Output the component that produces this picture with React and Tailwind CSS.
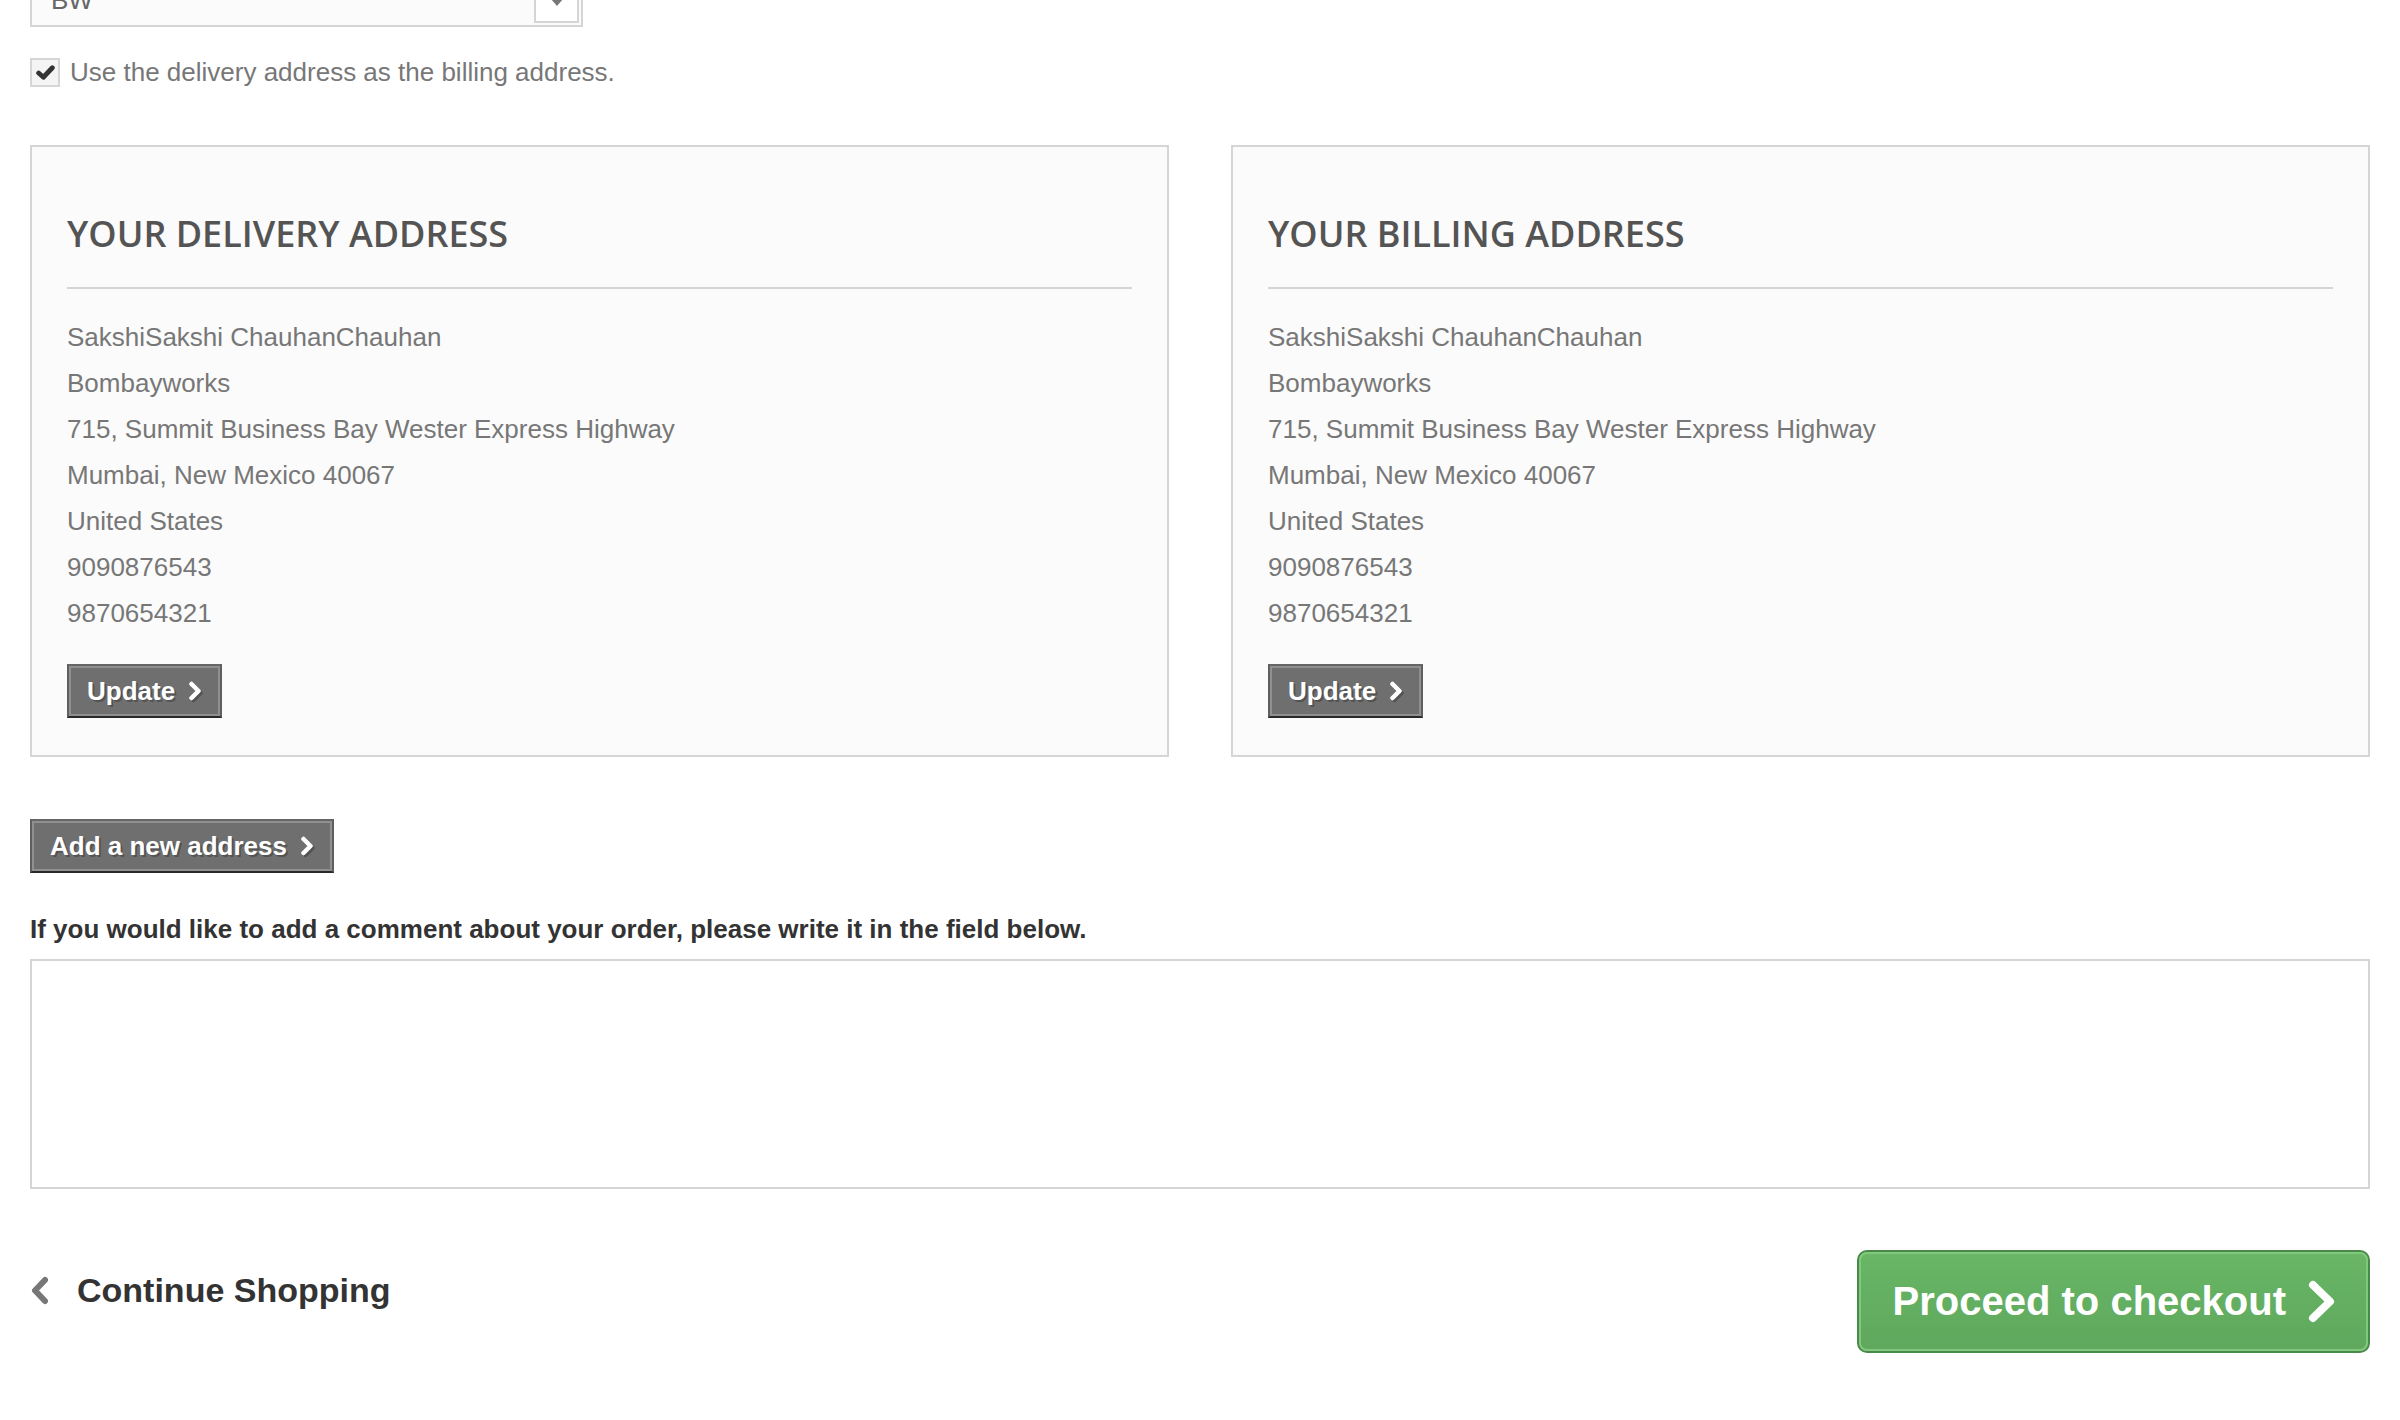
import React from 'react';

const lines = [
  'SakshiSakshi ChauhanChauhan',
  'Bombayworks',
  '715, Summit Business Bay Wester Express Highway',
  'Mumbai, New Mexico 40067',
  'United States',
  '9090876543',
  '9870654321',
];

const ChevronRight = ({ className, width = 4.5 }) => (
  <svg viewBox="0 0 14 20" className={className} fill="none" stroke="currentColor" strokeWidth={width} strokeLinecap="round" strokeLinejoin="round">
    <path d="M3.5 3l7 7-7 7" />
  </svg>
);

const SmallButton = ({ children }) => (
  <button className="inline-block border-2 border-[#5f5f5f] border-t-[#666666] border-b-[#292929] bg-[#6f6f6f] text-white">
    <span className="flex items-center gap-[13px] border-2 border-[#909090] px-[16px] py-[6px] text-[26px] font-bold leading-[34px] [text-shadow:2px_2px_0_rgba(0,0,0,0.25)]">
      {children}
      <ChevronRight className="h-[20px] w-[14px] drop-shadow-[2px_2px_0_rgba(0,0,0,0.25)]" />
    </span>
  </button>
);

const AddressBox = ({ title }) => (
  <div className="border-2 border-[#d6d4d4] bg-[#fbfbfb] px-[35px] pt-[65px] pb-[37px]">
    <h3 className="border-b-2 border-[#d6d4d4] pb-[31px] font-['Open_Sans',sans-serif] text-[36px] font-semibold uppercase leading-[44px] text-[#555454]">
      {title}
    </h3>
    <ul className="mt-[25px] text-[26px] leading-[46px] text-[#777777]">
      {lines.map((line) => (
        <li key={line}>{line}</li>
      ))}
    </ul>
    <div className="mt-[28px]">
      <SmallButton>Update</SmallButton>
    </div>
  </div>
);

export default function App() {
  return (
    <div className="min-h-screen overflow-hidden bg-white px-[30px] font-['Liberation_Sans',Arial,sans-serif] text-[26px]">
      {/* country select, scrolled half out of view */}
      <div className="relative -mt-[27px] flex h-[54px] w-[553px] items-center border-2 border-[#d6d4d4] bg-[#fbfbfb] pl-[19px] leading-[50px] text-[#666666]">
        BW
        <div className="absolute right-[2px] bottom-[2px] flex h-[46px] w-[45px] items-center justify-center border-2 border-[#d6d4d4] bg-white">
          <svg viewBox="0 0 12 7" className="mt-[4px] h-[7px] w-[12px] text-[#777777]">
            <path d="M0 0h12L6 7z" fill="currentColor" />
          </svg>
        </div>
      </div>

      <label className="mt-[31px] flex h-[29px] items-center gap-[10px] text-[#777777]">
        <span className="flex h-[29px] w-[30px] items-center justify-center border-2 border-[#d6d6d6] bg-[#f4f4f4]">
          <svg viewBox="0 0 18 14" className="h-[15px] w-[19px] text-[#333333]" fill="none" stroke="currentColor" strokeWidth="4.5" strokeLinecap="round" strokeLinejoin="round">
            <path d="M2.5 7.5l4.5 4l8.5-9" />
          </svg>
        </span>
        <span className="leading-[29px]">Use the delivery address as the billing address.</span>
      </label>

      <div className="mt-[58px] grid grid-cols-2 gap-[62px]">
        <AddressBox title="Your delivery address" />
        <AddressBox title="Your billing address" />
      </div>

      <div className="mt-[62px]">
        <SmallButton>Add a new address</SmallButton>
      </div>

      <p className="mt-[38px] font-bold leading-[36px] text-[#333333]">
        If you would like to add a comment about your order, please write it in the field below.
      </p>
      <textarea className="mt-[12px] block h-[230px] w-full resize-none border-2 border-[#d6d4d4] bg-white outline-none" />

      <div className="mt-[61px] flex items-start justify-between">
        <a className="mt-[20px] flex items-center gap-[28px] text-[34px] font-bold leading-[40px] text-[#333333]">
          <svg viewBox="0 0 19 29" className="h-[29px] w-[19px] text-[#777777]" fill="none" stroke="currentColor" strokeWidth="6" strokeLinecap="round" strokeLinejoin="round">
            <path d="M15 4L5 14.5 15 25" />
          </svg>
          Continue Shopping
        </a>
        <button className="rounded-[10px] border-2 border-[#4a8a48] bg-[#62ad60] text-white">
          <span className="flex items-center gap-[22px] rounded-[8px] border-2 border-[#80c87d] bg-gradient-to-b from-[#68b666] to-[#5fa85d] pl-[32px] pr-[30px] py-[23px] text-[40px] font-bold leading-[49px]">
            Proceed to checkout
            <svg viewBox="0 0 28 43" className="h-[43px] w-[28px]" fill="none" stroke="currentColor" strokeWidth="8" strokeLinecap="round" strokeLinejoin="round">
              <path d="M5 5l17 16.5L5 38" />
            </svg>
          </span>
        </button>
      </div>
    </div>
  );
}
